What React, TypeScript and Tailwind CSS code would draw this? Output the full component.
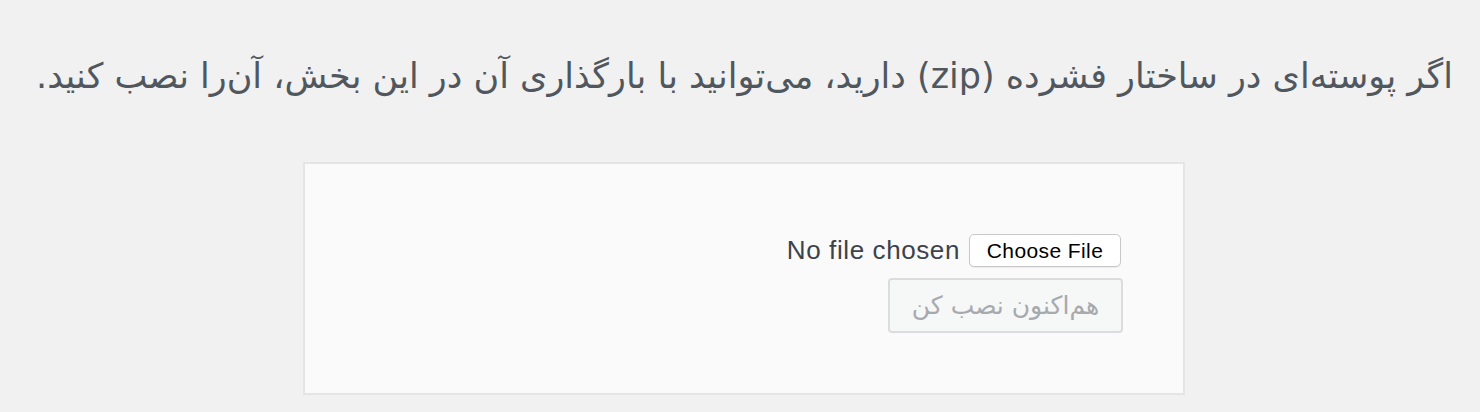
import React from 'react';

const fa = { fontFamily: '"DejaVu Sans", "Noto Sans", sans-serif' };
const en = { fontFamily: '"Liberation Sans", Arial, sans-serif' };

export default function App() {
  return (
    <div className="h-[412px] w-[1480px] overflow-hidden bg-[#f1f1f1]">
      {/* توضیح بالای فرم */}
      <p
        dir="rtl"
        style={fa}
        className="h-[162px] pt-[50px] pr-[27px] text-right text-[35px] leading-[52px] text-[#50575e]"
      >
        اگر پوسته‌ای در ساختار فشرده (zip) دارید، می‌توانید با بارگذاری آن در این بخش، آن‌را نصب کنید.
      </p>

      {/* کادر بارگذاری */}
      <div className="ml-[303px] h-[233px] w-[882px] border-2 border-[#e5e5e5] bg-[#fafafa] pr-[62px] pt-[70px]">
        <div className="flex flex-col items-end gap-[11px]">
          <div className="flex h-[33px] items-center gap-[9px]">
            <span style={en} className="text-[26px] tracking-[0.6px] text-[#3c434a]">
              No file chosen
            </span>
            <button
              style={en}
              className="h-[33px] w-[152px] rounded-[5px] border border-[#c8c8c8] bg-white text-[21px] tracking-[0.4px] text-black shadow-[0_1px_1px_rgba(0,0,0,0.06)]"
            >
              Choose File
            </button>
          </div>
          <button
            dir="rtl"
            style={fa}
            className="-mr-[2px] h-[55px] w-[235px] rounded-[4px] border-2 border-[#dcdcde] bg-[#f6f7f7] text-[25px] text-[#a7aaad]"
          >
            هم‌اکنون نصب کن
          </button>
        </div>
      </div>
    </div>
  );
}
